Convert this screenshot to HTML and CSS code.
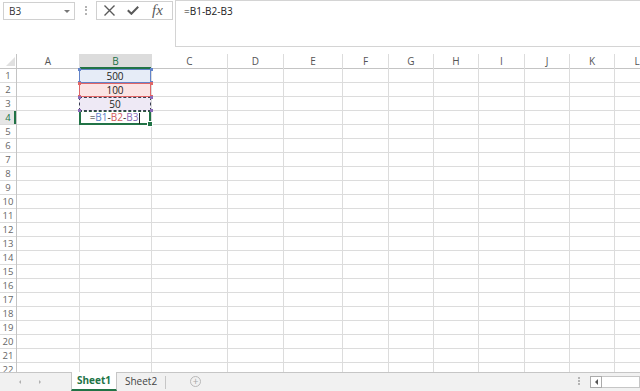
FILE: index.html
```html
<!DOCTYPE html>
<html lang="en">
<head>
  <meta charset="UTF-8">
  <title>Book1 - Excel</title>
  <link rel="stylesheet" href="styles.css">
</head>
<body>

  <!-- Name box + formula bar -->
  <div class="topbar">
    <div class="namebox">
      <span>B3</span>
      <span class="drop"></span>
    </div>
    <div class="grip"></div>
    <div class="fbtns">
      <svg class="ico-x" width="11" height="11" viewBox="0 0 11 11">
        <path d="M0.5 0.5 L10.5 10.5 M10.5 0.5 L0.5 10.5" stroke="#5a5a5a" stroke-width="1.4" fill="none"/>
      </svg>
      <svg class="ico-ok" width="12" height="9" viewBox="0 0 12 9">
        <path d="M0.8 4.2 L4.4 7.8 L11.2 0.8" stroke="#5a5a5a" stroke-width="2" fill="none"/>
      </svg>
      <span class="fx">fx</span>
    </div>
    <div class="formula">=B1-B2-B3</div>
  </div>

  <!-- Grid -->
  <div class="sheet">
    <div class="col rowhead">
      <div class="hd"><span class="corner"></span></div>
      <div class="rn">1</div>
      <div class="rn">2</div>
      <div class="rn">3</div>
      <div class="rn active">4</div>
      <div class="rn">5</div>
      <div class="rn">6</div>
      <div class="rn">7</div>
      <div class="rn">8</div>
      <div class="rn">9</div>
      <div class="rn">10</div>
      <div class="rn">11</div>
      <div class="rn">12</div>
      <div class="rn">13</div>
      <div class="rn">14</div>
      <div class="rn">15</div>
      <div class="rn">16</div>
      <div class="rn">17</div>
      <div class="rn">18</div>
      <div class="rn">19</div>
      <div class="rn">20</div>
      <div class="rn">21</div>
      <div class="rn">22</div>
    </div>
    <div class="col col-a"><div class="hd">A</div><div class="body"></div></div>
    <div class="col col-b">
      <div class="hd active">B</div>
      <div class="body">
        <div class="cell ref-1">500</div>
        <div class="cell ref-2">100</div>
        <div class="cell ref-3">50</div>
        <div class="cell editing">=<span class="r1">B1</span>-<span class="r2">B2</span>-<span class="r3">B3</span><span class="cursor"></span></div>
      </div>
    </div>
    <div class="col col-c"><div class="hd">C</div><div class="body"></div></div>
    <div class="col col-d"><div class="hd">D</div><div class="body"></div></div>
    <div class="col col-e"><div class="hd">E</div><div class="body"></div></div>
    <div class="col col-f"><div class="hd">F</div><div class="body"></div></div>
    <div class="col col-g"><div class="hd">G</div><div class="body"></div></div>
    <div class="col col-h"><div class="hd">H</div><div class="body"></div></div>
    <div class="col col-i"><div class="hd">I</div><div class="body"></div></div>
    <div class="col col-j"><div class="hd">J</div><div class="body"></div></div>
    <div class="col col-k"><div class="hd">K</div><div class="body"></div></div>
    <div class="col col-l"><div class="hd">L</div><div class="body"></div></div>
  </div>

  <!-- Sheet tabs -->
  <div class="tabbar">
    <div class="nav">
      <span class="arr-left"></span>
      <span class="arr-right"></span>
    </div>
    <div class="tab active">Sheet1</div>
    <div class="tab">Sheet2</div>
    <div class="tab-sep"></div>
    <div class="add">+</div>
    <div class="spacer"></div>
    <div class="grip small"></div>
    <div class="hscroll">
      <div class="hs-btn"><span class="arr-dark"></span></div>
      <div class="hs-track"></div>
    </div>
  </div>

</body>
</html>
```

FILE: styles.css
```css
/* Page */
body {
  margin: 0;
  width: 640px;
  height: 391px;
  overflow: hidden;
  background: #fff;
  font-family: "Open Sans", "Noto Sans", sans-serif;
  font-size: 10px;
  color: #333;
  display: flex;
  flex-direction: column;
}

/* Formula bar */
.topbar {
  height: 47px;
  display: flex;
  align-items: flex-start;
  flex-shrink: 0;
}

.namebox {
  margin: 2px 0 0 3px;
  width: 72px;
  height: 18px;
  box-sizing: border-box;
  border: 1px solid #d0d0d0;
  padding-left: 5px;
  display: flex;
  align-items: center;
  justify-content: space-between;
  color: #333;
}

.drop {
  width: 0;
  height: 0;
  margin-right: 4px;
  border-left: 3px solid transparent;
  border-right: 3px solid transparent;
  border-top: 3px solid #777;
}

.grip {
  margin: 6px 0 0 10px;
  width: 0;
  height: 9px;
  border-left: 2px dotted #b4b4b4;
}

.fbtns {
  margin: 1px 0 0 9px;
  width: 77px;
  height: 19px;
  box-sizing: border-box;
  border: 1px solid #d0d0d0;
  display: flex;
  align-items: center;
  padding-left: 7px;
}

.ico-ok {
  margin-left: 12px;
}

.fx {
  margin-left: 13px;
  font-family: "Liberation Serif", serif;
  font-style: italic;
  font-size: 15px;
  line-height: 15px;
  color: #5a5a5a;
}

.formula {
  margin-left: 2px;
  flex: 1;
  height: 47px;
  box-sizing: border-box;
  border: 1px solid #d4d4d4;
  border-right: none;
  padding: 3px 8px;
  color: #222;
}

/* Grid */
.sheet {
  margin-top: 7px;
  flex: 1;
  display: flex;
  overflow: hidden;
}

.col {
  flex-shrink: 0;
  display: flex;
  flex-direction: column;
  box-sizing: border-box;
  border-right: 1px solid #dcdcdc;
}

.rowhead { width: 17px; border-right-color: #c4c4c4; }
.col-a { width: 63px; }
.col-b { width: 72px; }
.col-c { width: 76px; }
.col-d { width: 56px; }
.col-e { width: 59px; }
.col-f { width: 46px; }
.col-g, .col-h, .col-j, .col-k, .col-l { width: 45px; }
.col-i { width: 46px; }

.hd {
  flex-shrink: 0;
  height: 15px;
  box-sizing: border-box;
  border-bottom: 1px solid #c4c4c4;
  text-align: center;
  line-height: 15px;
  color: #555;
  position: relative;
}

.hd.active {
  background: #dcdcdc;
  color: #217346;
  border-bottom: 2px solid #217346;
}

.corner {
  position: absolute;
  right: 1px;
  bottom: 2px;
  width: 0;
  height: 0;
  border-left: 9px solid transparent;
  border-bottom: 9px solid #e0e0e0;
}

.rn {
  flex-shrink: 0;
  height: 14px;
  box-sizing: border-box;
  border-bottom: 1px solid #dcdcdc;
  text-align: center;
  line-height: 13px;
  color: #666;
  font-size: 9.5px;
}

.rn.active {
  background: #e6e6e6;
  color: #217346;
  box-shadow: inset -2px 0 0 #217346;
}

.body {
  flex: 1;
  background: repeating-linear-gradient(to bottom, #fff 0, #fff 13px, #dcdcdc 13px, #dcdcdc 14px);
}

/* Cells in column B */
.cell {
  position: relative;
  height: 14px;
  box-sizing: border-box;
  margin-left: -1px;
  width: calc(100% + 1px);
  text-align: center;
  line-height: 12px;
  color: #222;
}

.cell::before {
  content: "";
  position: absolute;
  z-index: 2;
  left: -2px;
  top: -2px;
  width: 3px;
  height: 3px;
}

.ref-1 { background: #e6ecf7; border: 1px solid #6283c8; }
.ref-1::before { background: #6283c8; box-shadow: 72px 0 #6283c8, 0 13px #6283c8, 72px 13px #6283c8; }

.ref-2 { background: #fbe4e4; border: 1px solid #e06666; }
.ref-2::before { background: #e06666; box-shadow: 72px 0 #e06666, 0 13px #e06666, 72px 13px #e06666; }

.ref-3 { background: #eee9f5; border: 1px dashed #3a3f52; }
.ref-3::before { background: #8a6bb8; box-shadow: 72px 0 #8a6bb8, 0 13px #8a6bb8, 72px 13px #8a6bb8; }

.editing {
  background: #fff;
  border: 2px solid #217346;
  border-top: 1px dashed #2d5a3f;
  line-height: 11px;
}

.editing::after {
  content: "";
  position: absolute;
  right: -4px;
  bottom: -4px;
  width: 4px;
  height: 4px;
  background: #217346;
  border: 1px solid #fff;
}

.r1 { color: #5b7fc8; }
.r2 { color: #d05c5c; }
.r3 { color: #8a6bb8; }

.cursor {
  display: inline-block;
  width: 1px;
  height: 11px;
  margin-left: 1px;
  background: #222;
  vertical-align: middle;
}

/* Sheet tabs */
.tabbar {
  height: 19px;
  flex-shrink: 0;
  box-sizing: border-box;
  border-top: 1px solid #c6c6c6;
  background: #f1f1f1;
  display: flex;
  align-items: stretch;
}

.nav {
  width: 71px;
  display: flex;
  align-items: center;
  padding-left: 19px;
  box-sizing: border-box;
}

.arr-left, .arr-right {
  width: 0;
  height: 0;
  border-top: 2px solid transparent;
  border-bottom: 2px solid transparent;
}

.arr-left { border-right: 2px solid #b0b0b0; }
.arr-right { border-left: 2px solid #b0b0b0; margin-left: 18px; }

.tab {
  padding: 0 8px;
  line-height: 17px;
  color: #444;
}

.tab.active {
  width: 46px;
  box-sizing: border-box;
  padding: 0;
  text-align: center;
  background: #fff;
  color: #217346;
  font-weight: bold;
  border-left: 1px solid #c6c6c6;
  border-right: 1px solid #c6c6c6;
  border-bottom: 2px solid #217346;
  margin-top: -1px;
}

.tab-sep {
  margin: 3px 0 2px 0;
  width: 1px;
  background: #c6c6c6;
}

.add {
  margin: 3px 0 0 24px;
  width: 11px;
  height: 11px;
  box-sizing: border-box;
  border: 1px solid #b8b8b8;
  border-radius: 50%;
  color: #a8a8a8;
  font-size: 10px;
  line-height: 8px;
  text-align: center;
}

.spacer { flex: 1; }

.grip.small {
  margin: 4px 10px 0 0;
  height: 8px;
}

.hscroll {
  display: flex;
  align-items: center;
  width: 50px;
}

.hs-btn {
  width: 12px;
  height: 12px;
  box-sizing: border-box;
  border: 1px solid #ababab;
  background: #fff;
  display: flex;
  align-items: center;
  justify-content: center;
}

.arr-dark {
  width: 0;
  height: 0;
  border-top: 3px solid transparent;
  border-bottom: 3px solid transparent;
  border-right: 3px solid #555;
}

.hs-track {
  flex: 1;
  height: 12px;
  box-sizing: border-box;
  border: 1px solid #c6c6c6;
  border-left: none;
  background: #fff;
}
```
